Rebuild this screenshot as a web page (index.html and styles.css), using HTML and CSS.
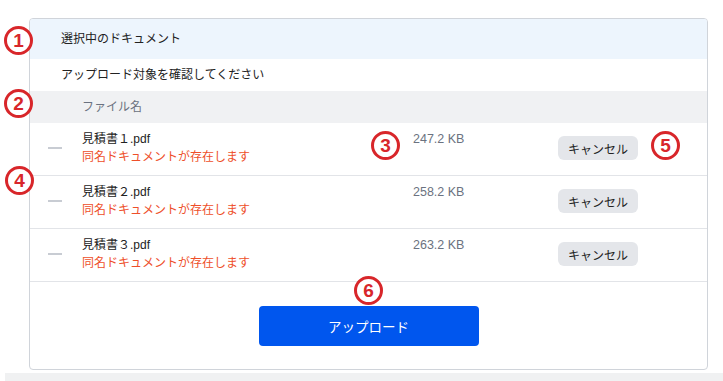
FILE: index.html
```html
<!DOCTYPE html>
<html lang="ja">
<head>
    <meta charset="UTF-8" />
    <title>アップロード確認</title>
    <link rel="stylesheet" href="styles.css">
</head>
<body>
<div class="page">
    <div class="card">
        <div class="card-head">選択中のドキュメント</div>
        <div class="card-sub">アップロード対象を確認してください</div>

        <div class="table-head">ファイル名</div>

        <div class="file-row">
            <span class="dash"></span>
            <div class="file-info">
                <div class="file-name">見積書１.pdf</div>
                <div class="file-warn">同名ドキュメントが存在します</div>
            </div>
            <div class="file-size">247.2 KB</div>
            <button class="cancel-btn">キャンセル</button>
        </div>
        <div class="file-row">
            <span class="dash"></span>
            <div class="file-info">
                <div class="file-name">見積書２.pdf</div>
                <div class="file-warn">同名ドキュメントが存在します</div>
            </div>
            <div class="file-size">258.2 KB</div>
            <button class="cancel-btn">キャンセル</button>
        </div>
        <div class="file-row">
            <span class="dash"></span>
            <div class="file-info">
                <div class="file-name">見積書３.pdf</div>
                <div class="file-warn">同名ドキュメントが存在します</div>
            </div>
            <div class="file-size">263.2 KB</div>
            <button class="cancel-btn">キャンセル</button>
        </div>

        <div class="card-foot">
            <button class="upload-btn">アップロード</button>
        </div>
    </div>
    <div class="bottom-bar"></div>

    <!-- annotation markers -->
    <span class="mark m1">1</span>
    <span class="mark m2">2</span>
    <span class="mark m3">3</span>
    <span class="mark m4">4</span>
    <span class="mark m5">5</span>
    <span class="mark m6">6</span>
</div>
</body>
</html>
```

FILE: styles.css
```css
* {
    box-sizing: border-box;
}

body {
    margin: 0;
    background: #fff;
    font-family: "Liberation Sans", "Noto Sans CJK JP", sans-serif;
    font-size: 12px;
    color: #222;
}

.page {
    position: relative;
    padding: 18px 15px 0 29px;
    height: 381px;
    overflow: hidden;
}

.card {
    width: 679px;
    border: 1px solid #d0d4da;
    border-radius: 4px;
    overflow: hidden;
    background: #fff;
}

.card-head {
    height: 40px;
    line-height: 40px;
    padding-left: 31px;
    background: #edf5fd;
}

.card-sub {
    height: 32px;
    line-height: 32px;
    padding-left: 31px;
}

.table-head {
    height: 32px;
    line-height: 32px;
    padding-left: 52px;
    background: #f0f1f3;
    color: #6b7280;
}

.file-row {
    display: grid;
    grid-template-columns: 14px 351px 145px 80px;
    align-items: center;
    padding: 7px 0 9px 18px;
    border-bottom: 1px solid #e2e4e8;
}

.file-info {
    padding-left: 20px;
    line-height: 18px;
}

.file-size {
    align-self: start;
    line-height: 18px;
    font-size: 12.5px;
    color: #6b7280;
}

.cancel-btn {
    width: 80px;
    height: 24px;
    border: none;
    border-radius: 6px;
    background: #e4e6ea;
    color: #222;
    font-family: inherit;
    font-size: 12px;
    padding: 0;
}

.dash {
    display: block;
    height: 2px;
    background: #c8ccd3;
}

.file-warn {
    color: #ee4f2a;
}

.card-foot {
    display: flex;
    justify-content: center;
    padding: 24px 0 23px;
}

.upload-btn {
    width: 220px;
    height: 40px;
    border: none;
    border-radius: 4px;
    background: #0056ee;
    color: #fff;
    font-family: inherit;
    font-size: 13.5px;
    padding: 0;
}

.bottom-bar {
    margin: 3px -15px 0 -24px;
    height: 8px;
    background: #f0f1f2;
}

.mark {
    position: absolute;
    width: 29px;
    height: 29px;
    margin: -14px 0 0 -14px;
    border: 3px solid #d8262a;
    border-radius: 50%;
    background: #fff;
    color: #d8262a;
    font-family: "Liberation Sans", sans-serif;
    font-weight: bold;
    font-size: 19px;
    line-height: 23px;
    text-align: center;
}

.m1 { left: 18px; top: 40px; }
.m2 { left: 18px; top: 103px; }
.m3 { left: 385px; top: 145px; }
.m4 { left: 19px; top: 180px; }
.m5 { left: 665px; top: 145px; }
.m6 { left: 368px; top: 290px; }
```
